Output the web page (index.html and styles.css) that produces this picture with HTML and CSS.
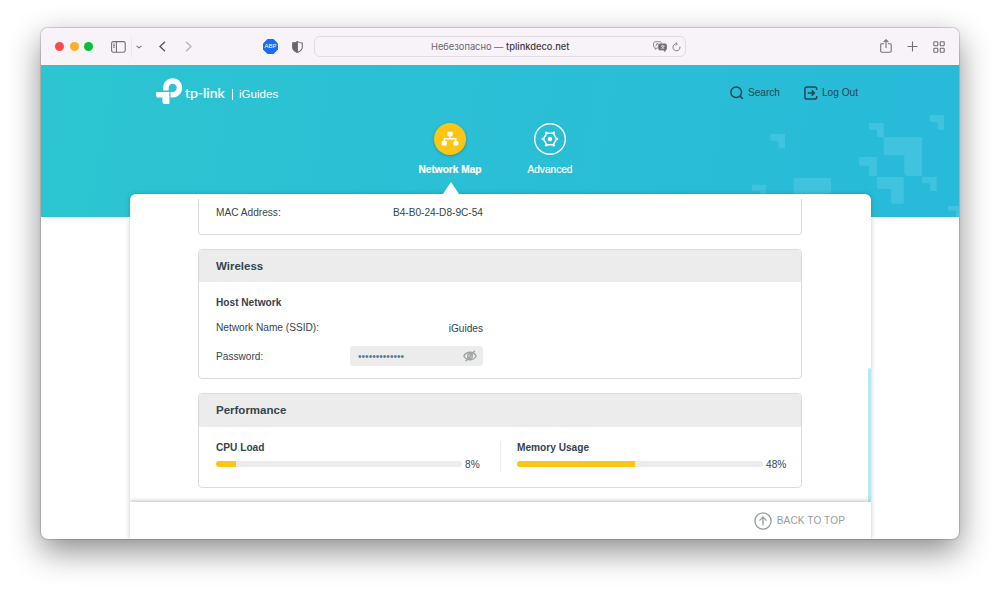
FILE: index.html
```html
<!DOCTYPE html>
<html lang="en">
<head>
    <meta charset="UTF-8">
    <title>tplinkdeco.net</title>
    <link rel="stylesheet" href="styles.css">
</head>
<body>
    <div class="window">
        <!-- browser toolbar -->
        <div class="toolbar">
            <div class="dots">
                <span class="dot red"></span>
                <span class="dot yellow"></span>
                <span class="dot green"></span>
            </div>
            <svg class="ico-sidebar" width="15" height="12" viewBox="0 0 15 12"><rect x=".6" y=".6" width="13.6" height="10.6" rx="1.6"/><path d="M5.4 .6v10.6M2.2 3h1.6M2.2 4.6h1.6M2.2 6.2h1.6"/></svg>
            <span class="sep"></span>
            <svg class="ico-down" width="6" height="4" viewBox="0 0 6 4"><path d="M.6 .8L3 2.8L5.4 .8"/></svg>
            <svg class="ico-back" width="7" height="11" viewBox="0 0 7 11"><path d="M6 .7L1 5.5L6 10.3"/></svg>
            <svg class="ico-next" width="7" height="11" viewBox="0 0 7 11"><path d="M1 .7L6 5.5L1 10.3"/></svg>
            <span class="abp">ABP</span>
            <svg class="ico-shield" width="11" height="12" viewBox="0 0 11 12"><path d="M5.5 .6C4 1.6 2.5 2 .7 2.1V6c0 2.7 2 4.3 4.8 5.4C8.3 10.3 10.3 8.7 10.3 6V2.1C8.500 2 7 1.600 5.500 .6z"/><path class="half" d="M5.500 .6C4 1.600 2.500 2 .7 2.100V6c0 2.700 2 4.300 4.800 5.400z"/></svg>
            <div class="address">
                <p>Небезопасно — <b>tplinkdeco.net</b></p>
                <svg class="ico-trans" width="14" height="11" viewBox="0 0 14 11"><path d="M5.200 6.900H4L2.300 8.400V6.900C1.200 6.900 .6 6.300 .6 5.300V2.300C.6 1.300 1.200 .7 2.200 .7h4.600C7.800 .7 8.400 1.300 8.400 2.300M2.700 5.500L4.400 2L5.500 4.200"/><path class="fill" d="M7.200 2.900h4.800c1 0 1.600.6 1.600 1.600v2.900c0 1-.6 1.600-1.500 1.600v1.600L10.400 9H7.200c-1 0-1.600-.6-1.600-1.600V4.500c0-1 .6-1.600 1.600-1.600z"/><path class="light" d="M8 4.900h3.400M9.700 4v.9M11 5c-.4 1.300-1.400 2.200-2.700 2.700M8.600 5.200c.4 1 1.300 1.900 2.600 2.400"/></svg>
                <svg class="ico-reload" width="9" height="10" viewBox="0 0 9 10"><path d="M4.700 1.800A3.500 3.500 0 1 0 7.900 4.600M3.700 .3L5.400 1.900L3.800 3.500"/></svg>
            </div>
            <svg class="ico-share" width="12" height="14" viewBox="0 0 12 14"><path d="M4 4.700H1.900C1.100 4.700 .7 5.100 .7 5.900V12c0 .8.4 1.200 1.200 1.200h8.100c.8 0 1.200-.4 1.200-1.200V5.900c0-.8-.4-1.200-1.200-1.200H8M6 9V.9M3.700 3L6 .8L8.300 3"/></svg>
            <svg class="ico-plus" width="11" height="11" viewBox="0 0 11 11"><path d="M5.500 .5v10M.5 5.500h10"/></svg>
            <svg class="ico-grid" width="12" height="12" viewBox="0 0 12 12"><rect x=".8" y=".8" width="4" height="4" rx=".7"/><rect x="7.200" y=".8" width="4" height="4" rx=".7"/><rect x=".8" y="7.200" width="4" height="4" rx=".7"/><rect x="7.200" y="7.200" width="4" height="4" rx=".7"/></svg>
        </div>

        <!-- header -->
        <div class="hero">
            <svg class="squares" width="218" height="152" viewBox="741 65 218 152">
                <path d="M770.300 134H785v14.300h-5.200q-1.500 0-1.500-1.500v-6.100h-6.500q-1.500 0-1.500-1.500z"/>
                <path d="M869 123h14.700v14.300h-5.200q-1.500 0-1.500-1.500v-6.100h-6.500q-1.500 0-1.500-1.500z"/>
                <path d="M883.700 137.300H922V176h-14.700q-3 0-3-3v-17.700h-17.600q-3 0-3-3z"/>
                <path d="M859 157h18v19h-6q-2 0-2-2v-8.300h-8q-2 0-2-2z"/>
                <path d="M877 177h26.700v26.700h-10.700q-2 0-2-2V189h-12q-2 0-2-2z"/>
                <path d="M922 177h14.700v14h-5.200q-1.500 0-1.500-1.500v-6.200h-6.500q-1.500 0-1.500-1.500z"/>
                <path d="M929.700 115H944v14.700h-4.800q-1.500 0-1.500-1.500V122h-6.500q-1.500 0-1.500-1.500z"/>
                <path d="M751.700 184.700H766V199h-6.300v-8h-6.500q-1.500 0-1.500-1.500z"/>
                <path d="M793.700 178H831v20h-37.300z"/>
                <path d="M948 206h11v11h-3v-6.300h-6.500q-1.500 0-1.500-1.500z"/>
            </svg>
            <div class="top">
                <svg class="logo" width="27" height="27" viewBox="0 0 27 27"><path d="M0 14h13.400v12.100H9c-1.600 0-2.600-1-2.600-2.600v-3.900H2.600C1 19.600 0 18.600 0 17z"/><path d="M7.200 12.600V9.700C7.200 4.300 11.400 .2 16.700 .2s9.500 4.200 9.500 9.500s-4.200 9.700-9.500 9.700h-2.200V14h2.200c2.400 0 4-1.800 4-4.300c0-2.300-1.700-4-4-4s-4 1.700-4 4v2.900z"/></svg>
                <span class="brand">tp-link</span>
                <span class="bar"></span>
                <span class="owner">iGuides</span>
                <div class="links">
                    <a class="link"><svg width="14" height="14" viewBox="0 0 14 14"><circle cx="6.200" cy="6.200" r="5.300"/><path d="M10 10.100L12.800 12.900"/></svg>Search</a>
                    <a class="link"><svg width="14" height="14" viewBox="0 0 14 14"><path d="M12.700 4V3C12.700 1.600 12 .9 10.700 .9H2.900C1.600 .9 .9 1.600 .9 3v8c0 1.400.7 2.100 2 2.100h7.800c1.300 0 2-.7 2-2.100v-1M3.800 7h6.200M7.700 4.400L10.300 7L7.700 9.600"/></svg>Log Out</a>
                </div>
            </div>
            <div class="nav">
                <div class="nav-item active">
                    <div class="circle"><svg width="18" height="16" viewBox="0 0 18 16"><path class="line" d="M9 4v4M3.300 11V7.700h11.400V11"/><rect x="6.400" y=".7" width="5.200" height="4.600" rx="1"/><rect x=".7" y="10" width="5" height="4.600" rx="1"/><rect x="12.300" y="10" width="5" height="4.600" rx="1"/></svg></div>
                    <p>Network Map</p>
                </div>
                <div class="nav-item">
                    <div class="circle"><svg width="18" height="18" viewBox="0 0 18 18"><path class="line" d="M5.800 3.200h6.400L15.600 9l-3.400 5.800H5.800L2.400 9z"/><circle cx="9" cy="9" r="2.200"/><g><circle cx="5.200" cy="2.700" r="1.200"/><circle cx="12.800" cy="2.700" r="1.200"/><circle cx="16.200" cy="9" r="1.200"/><circle cx="12.800" cy="15.300" r="1.200"/><circle cx="5.200" cy="15.300" r="1.200"/><circle cx="1.800" cy="9" r="1.200"/></g></svg></div>
                    <p>Advanced</p>
                </div>
            </div>
        </div>

        <!-- content -->
        <div class="panel">
            <div class="arrow"></div>
            <div class="scroll">
                <div class="card first">
                    <div class="row"><span>MAC Address:</span><em>B4-B0-24-D8-9C-54</em></div>
                </div>
                <div class="card wireless">
                    <h2>Wireless</h2>
                    <h3>Host Network</h3>
                    <div class="row ssid"><span>Network Name (SSID):</span><em>iGuides</em></div>
                    <div class="row pass">
                        <span>Password:</span>
                        <div class="input">
                            <span class="mask">•••••••••••••</span>
                            <svg width="14" height="12" viewBox="0 0 14 12"><path d="M.8 6C2.200 3.500 4.400 2.200 7 2.200S11.800 3.500 13.200 6C11.800 8.500 9.600 9.800 7 9.800S2.200 8.500 .8 6z"/><circle cx="7" cy="6" r="2.300"/><path d="M2.600 11.200L11.800 .8"/></svg>
                        </div>
                    </div>
                </div>
                <div class="card perf">
                    <h2>Performance</h2>
                    <div class="loads">
                        <div class="load">
                            <h3>CPU Load</h3>
                            <div class="meter"><div class="track"><div class="value" style="width:8%"></div></div><span>8%</span></div>
                        </div>
                        <div class="load">
                            <h3>Memory Usage</h3>
                            <div class="meter"><div class="track"><div class="value" style="width:48%"></div></div><span>48%</span></div>
                        </div>
                    </div>
                </div>
                <div class="thumb"></div>
            </div>
            <div class="footer">
                <svg width="18" height="18" viewBox="0 0 18 18"><circle cx="9" cy="9" r="8.100"/><path d="M9 13.200V5.400M5.400 8.600L9 5.100L12.600 8.600"/></svg>
                <span>BACK TO TOP</span>
            </div>
        </div>
    </div>
</body>
</html>
```
FILE: styles.css
```css
*{
    margin: 0;
    padding: 0;
    box-sizing: border-box;
}
body{
    height: 593px;
    padding: 28px 0 0 41px;
    overflow: hidden;
    background: #fff;
    font: 10.15px/12px "Liberation Sans", Arial, sans-serif;
    color: #36444b;
}
svg{
    display: block;
    flex: none;
    fill: none;
}
.window{
    width: 918px;
    height: 511px;
    overflow: hidden;
    border-radius: 7px;
    background: #fff;
    box-shadow: 0 0 1px 1px rgba(0,0,0,.16), 0 12px 32px rgba(0,0,0,.46);
}

/* toolbar */
.toolbar{
    display: flex;
    align-items: center;
    height: 37px;
    padding-left: 14px;
    background: #f8f3f9;
}
.toolbar svg{
    stroke: #756f77;
    stroke-width: 1.1;
}
.dots{
    display: flex;
    gap: 5.5px;
}
.dot{
    width: 9px;
    height: 9px;
    border-radius: 50%;
}
.red{
    background: #ff4a4c;
}
.yellow{
    background: #fdae2c;
}
.green{
    background: #05c138;
}
.toolbar .ico-sidebar{
    margin-left: 18px;
}
.sep{
    width: 1px;
    height: 20px;
    margin-left: 5px;
    background: #ebe6ed;
}
.toolbar .ico-down{
    margin-left: 4px;
}
.toolbar .ico-back{
    margin-left: 17px;
    stroke: #5c565e;
    stroke-width: 1.4;
}
.toolbar .ico-next{
    margin-left: 19px;
    stroke: #b9b3bb;
    stroke-width: 1.4;
}
.abp{
    width: 15px;
    height: 15px;
    margin-left: 71px;
    background: #1c6cf4;
    clip-path: polygon(30% 0, 70% 0, 100% 30%, 100% 70%, 70% 100%, 30% 100%, 0 70%, 0 30%);
    color: #fff;
    font-size: 6px;
    line-height: 15px;
    text-align: center;
}
.toolbar .ico-shield{
    margin-left: 14px;
}
.half{
    fill: #69636b;
}
.address{
    display: flex;
    align-items: center;
    width: 372px;
    height: 21px;
    margin-left: 11px;
    padding-right: 4px;
    border: 1px solid #e1dbe3;
    border-radius: 6px;
    font: 9.3px/20px Inter, sans-serif;
    color: #6b666d;
}
.address p{
    flex: 1;
    padding-left: 116px;
    white-space: nowrap;
}
.address b{
    font-weight: 500;
    color: #3d393f;
}
.address .ico-reload{
    margin-left: 5px;
    stroke-width: .9;
}
.address .ico-trans{
    stroke-width: .8;
}
.fill{
    fill: #756f77;
}
.light{
    stroke: #f8f3f9;
    stroke-width: .7;
}
.toolbar .ico-share{
    margin: 0 0 2px 194px;
}
.toolbar .ico-plus{
    margin-left: 15px;
}
.toolbar .ico-grid{
    margin-left: 15px;
}

/* header */
.hero{
    position: relative;
    height: 152px;
    background: linear-gradient(100deg, #2cc5d1, #2abfd6 50%, #28bad9);
}
.squares{
    position: absolute;
    top: 0;
    right: 0;
    fill: #3fc3de;
}
.top{
    display: flex;
    align-items: center;
    height: 54px;
    padding: 0 101px 0 115px;
    color: #fff;
}
.logo{
    margin-bottom: 2px;
    fill: #fff;
}
.brand{
    width: 41px;
    margin: 1px 0 0 2px;
    font: 14px/16px Lato, sans-serif;
    white-space: nowrap;
    -webkit-text-stroke: .2px #fff;
}
.bar{
    width: 1px;
    height: 11px;
    margin: 4px 6px 0 6px;
    background: #fff;
}
.owner{
    margin-top: 4px;
    font-size: 11.6px;
}
.links{
    display: flex;
    gap: 24px;
    margin-left: auto;
    padding-top: 1px;
    color: #254650;
}
.link{
    display: flex;
    align-items: center;
    gap: 4px;
}
.link svg{
    stroke: #254650;
    stroke-width: 1.5;
}
.nav{
    display: flex;
    justify-content: center;
    padding-top: 4px;
}
.nav-item{
    display: flex;
    flex-direction: column;
    align-items: center;
    width: 100px;
    color: #fff;
}
.nav-item p{
    margin-top: 9px;
    white-space: nowrap;
    -webkit-text-stroke: .2px #fff;
}
.active p{
    font-weight: bold;
}
.circle{
    display: flex;
    align-items: center;
    justify-content: center;
    width: 32px;
    height: 32px;
    border-radius: 50%;
    box-shadow: inset 0 0 0 1.4px #fff;
}
.active .circle{
    background: #fec514;
    box-shadow: 0 1px 3px rgba(0,70,90,.35);
}
.circle svg{
    fill: #fff;
}
.circle .line{
    fill: none;
    stroke: #fff;
    stroke-width: 1.5;
}

/* content */
.panel{
    position: relative;
    width: 741px;
    height: 345px;
    margin: -23px 0 0 89px;
    padding-top: 5px;
    border-radius: 6px 6px 0 0;
    background: #fff;
    box-shadow: 0 0 5px rgba(0,40,50,.25);
}
.arrow{
    position: absolute;
    top: -12px;
    left: 313px;
    border: solid transparent;
    border-width: 0 8px 12px;
    border-bottom-color: #fff;
}
.scroll{
    position: relative;
    height: 303px;
    padding: 0 69px 0 68px;
    overflow: hidden;
}
.card{
    margin-bottom: 14px;
    border: 1px solid #dadcdd;
    border-radius: 4px;
    padding: 0 17px;
}
.first{
    height: 36px;
    padding-top: 8px;
    border-top: 0;
    border-radius: 0 0 4px 4px;
}
.wireless{
    height: 130px;
}
.perf{
    height: 95px;
}
h2{
    height: 32px;
    margin: 0 -17px;
    padding-left: 17px;
    border-radius: 3px 3px 0 0;
    background: #ececec;
    font-size: 11.5px;
    line-height: 33px;
}
h3{
    font-size: 10.15px;
    line-height: 12px;
}
.wireless h3{
    margin-top: 15px;
}
.row{
    display: flex;
    justify-content: space-between;
    width: 267px;
}
.row em{
    font-style: normal;
}
.ssid{
    margin-top: 13px;
}
.ssid em{
    padding-top: 1px;
}
.pass{
    align-items: center;
    margin-top: 11px;
}
.pass > span{
    padding-top: 1px;
}
.input{
    display: flex;
    align-items: center;
    justify-content: space-between;
    width: 133px;
    height: 20px;
    padding: 0 6px 0 8px;
    border-radius: 3px;
    background: #ececec;
}
.input svg{
    stroke: #a0a3a5;
    stroke-width: 1.4;
}
.mask{
    padding-top: 1px;
    color: #557a90;
}
.loads{
    display: grid;
    grid-template-columns: 284px 1fr;
    margin-top: 14px;
}
.perf h2{
    height: 33px;
}
.load{
    height: 31px;
}
.load + .load{
    margin-right: -17px;
    padding-left: 16px;
    border-left: 1px solid #e9eaeb;
}
.load h3{
    padding-top: 1px;
}
.meter{
    display: flex;
    gap: 3px;
    margin-top: 4px;
}
.meter span{
    padding-top: 1px;
}
.track{
    width: 246px;
    height: 6px;
    margin-top: 3px;
    overflow: hidden;
    border-radius: 3px;
    background: #ececec;
}
.value{
    height: 100%;
    background: #fec514;
}
.thumb{
    position: absolute;
    right: 0;
    bottom: 0;
    width: 3px;
    height: 134px;
    border-radius: 2px;
    background: #b3eaf0;
}
.footer{
    position: relative;
    display: flex;
    align-items: center;
    justify-content: flex-end;
    gap: 5px;
    height: 37px;
    padding-right: 26px;
    background: #fff;
    clip-path: inset(-6px 0 0 0);
    box-shadow: 0 -1px 4px rgba(60,70,75,.35);
    color: #989c9f;
}
.footer span{
    letter-spacing: .08px;
}
.footer svg{
    stroke: #989c9f;
    stroke-width: 1.3;
}
```
